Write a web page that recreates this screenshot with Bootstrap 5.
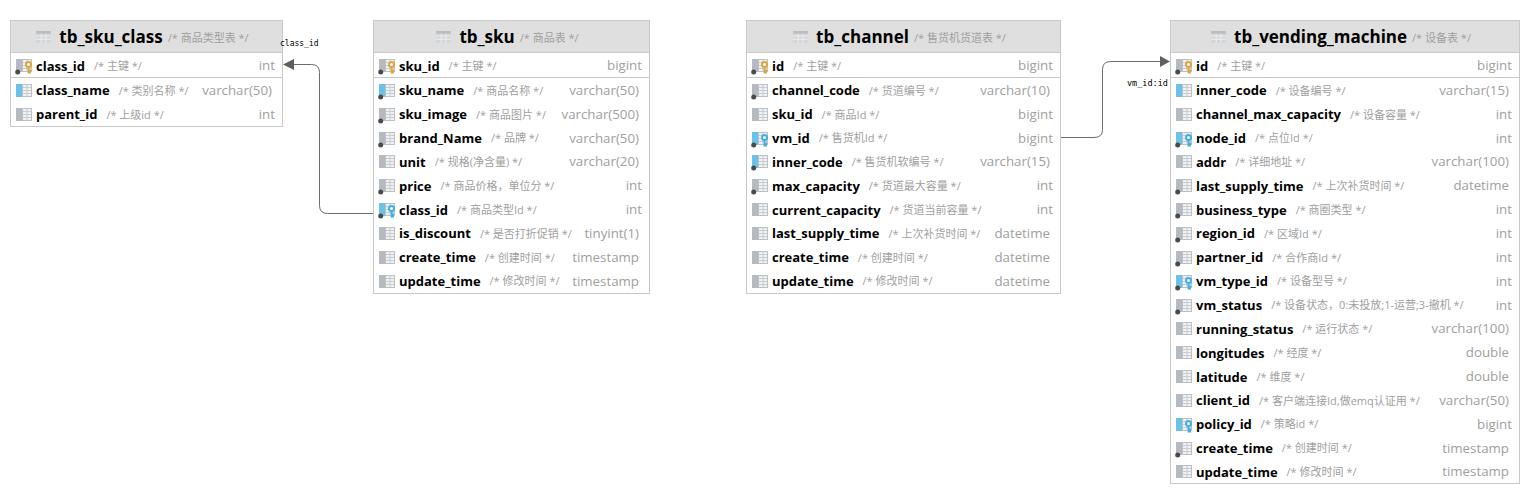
<!DOCTYPE html>
<html lang="zh">
<head>
<meta charset="utf-8">
<title>ER diagram</title>
<link href="https://cdn.jsdelivr.net/npm/bootstrap@5.3.0/dist/css/bootstrap.min.css" rel="stylesheet">
<style>
body{background:#fff;overflow:hidden;font-family:"Open Sans","Noto Sans CJK SC",sans-serif}
.canvas{position:relative;width:1534px;height:499px}
.links{position:absolute;left:0;top:0}
.er-table{position:absolute;top:20px;background:#fff;border:1px solid #c9c9c9}
.t1{left:10px;width:273px}
.t2{left:373px;width:277px}
.t3{left:746px;width:315px}
.t4{left:1170px;width:350px}
.er-head{height:32px;background:#dfdfdf;border-bottom:1px solid #c9c9c9;padding-right:8px}
.er-title{font-size:17px;font-weight:700;color:#000;line-height:1;margin:0 5px 0 8px}
.er-note{font-size:11px;color:#a0a0a0;white-space:nowrap;margin-top:3px}
.er-row{height:23.85px;padding-left:5px;padding-top:2px;white-space:nowrap}
.er-pk{height:25px;border-bottom:1px solid #c9c9c9}
.er-name{font-size:13px;font-weight:700;color:#000;margin-left:2px;line-height:1}
.er-cm{font-size:11px;color:#a0a0a0;margin-left:9px}
.er-ty{font-size:13.3px;color:#a0a0a0;margin-left:auto;padding-right:7px}
.er-ty.wide{padding-right:10px}
.ic{width:18px;height:18px;flex:none;overflow:visible}
symbol{overflow:visible}
.hic{width:15px;height:12px;flex:none}
.lbl{position:absolute;font-family:"DejaVu Sans Mono",monospace;font-size:8px;color:#000;line-height:1}
.l1{left:280px;top:40px}
.l2{left:1127px;top:79px;font-size:8.5px}
</style>
</head>
<body>
<svg width="0" height="0" class="position-absolute">
<defs>
<symbol id="hgrid" viewBox="0 0 16 13">
<rect width="16" height="13" fill="#d3d6d9"/>
<rect width="16" height="3" fill="#b9bec3"/>
<path d="M0 5.500H16M0 9H16M5.500 3V13M10.500 3V13" stroke="#f0f0f0" fill="none"/>
</symbol>
<symbol id="gc" viewBox="0 0 18 18">
<rect x="0" y="2" width="6" height="13" fill="#b5bac0"/>
<rect x="6.500" y="2.500" width="9" height="12" fill="#f0f1f2" stroke="#bcc1c5"/>
<path d="M7 5.500H15M7 8.500H15M7 11.500H15M11 3V14" stroke="#c8ccd0" fill="none"/>
</symbol>
<symbol id="bc" viewBox="0 0 18 18">
<rect x="0" y="2" width="6" height="13" fill="#6cc1e8"/>
<rect x="6.500" y="2.500" width="9" height="12" fill="#f0f1f2" stroke="#bcc1c5"/>
<path d="M7 5.500H15M7 8.500H15M7 11.500H15M11 3V14" stroke="#c8ccd0" fill="none"/>
</symbol>
<symbol id="dot" viewBox="0 0 18 18">
<circle cx="1.700" cy="15" r="2.500" fill="#4a4a4a"/>
</symbol>
<symbol id="gkey" viewBox="0 0 18 18">
<circle cx="12.500" cy="7.500" r="2.500" fill="#fff" stroke="#e0a63c" stroke-width="2"/>
<path d="M12.500 10V16.500M12.500 13.500H15M12.500 15.500H15" stroke="#e0a63c" stroke-width="1.800" fill="none"/>
</symbol>
<symbol id="bkey" viewBox="0 0 18 18">
<circle cx="12.500" cy="7.500" r="2.500" fill="#fff" stroke="#3fb0e3" stroke-width="2"/>
<path d="M12.500 10V16.500M12.500 13.500H15M12.500 15.500H15" stroke="#3fb0e3" stroke-width="1.800" fill="none"/>
</symbol>
<symbol id="pk" viewBox="0 0 18 18"><use href="#gc"/><use href="#gkey"/><use href="#dot"/></symbol>
<symbol id="fkd" viewBox="0 0 18 18"><use href="#bc"/><use href="#bkey"/><use href="#dot"/></symbol>
<symbol id="fk" viewBox="0 0 18 18"><use href="#bc"/><use href="#bkey"/></symbol>
<symbol id="gd" viewBox="0 0 18 18"><use href="#gc"/><use href="#dot"/></symbol>
<symbol id="bd" viewBox="0 0 18 18"><use href="#bc"/><use href="#dot"/></symbol>
</defs>
</svg>
<div class="canvas">
<svg class="links" width="1534" height="499" fill="none" stroke="#6b6b6b">
<path d="M373 213.500H327.500Q319.500 213.500 319.500 205.500V72.500Q319.500 64.500 311.500 64.500H293"/>
<path d="M283 64.500L294 59V70Z" fill="#5f5f5f" stroke="none"/>
<path d="M1061 137.500H1094Q1102.500 137.500 1102.500 129.500V69.500Q1102.500 61.500 1110.500 61.500H1160"/>
<path d="M1170 61.500L1160 56V67Z" fill="#5f5f5f" stroke="none"/>
</svg>

<div class="er-table t1">
<div class="er-head d-flex align-items-center justify-content-center"><svg class="hic"><use href="#hgrid"/></svg><span class="er-title">tb_sku_class</span><span class="er-note">/* 商品类型表 */</span></div>
<div class="er-row er-pk d-flex align-items-center"><svg class="ic"><use href="#pk"/></svg><span class="er-name">class_id</span><span class="er-cm">/* 主键 */</span><span class="er-ty">int</span></div>
<div class="er-row d-flex align-items-center"><svg class="ic"><use href="#bc"/></svg><span class="er-name">class_name</span><span class="er-cm">/* 类别名称 */</span><span class="er-ty wide">varchar(50)</span></div>
<div class="er-row d-flex align-items-center"><svg class="ic"><use href="#gc"/></svg><span class="er-name">parent_id</span><span class="er-cm">/* 上级id */</span><span class="er-ty">int</span></div>
</div>

<div class="er-table t2">
<div class="er-head d-flex align-items-center justify-content-center"><svg class="hic"><use href="#hgrid"/></svg><span class="er-title">tb_sku</span><span class="er-note">/* 商品表 */</span></div>
<div class="er-row er-pk d-flex align-items-center"><svg class="ic"><use href="#pk"/></svg><span class="er-name">sku_id</span><span class="er-cm">/* 主键 */</span><span class="er-ty">bigint</span></div>
<div class="er-row d-flex align-items-center"><svg class="ic"><use href="#bd"/></svg><span class="er-name">sku_name</span><span class="er-cm">/* 商品名称 */</span><span class="er-ty wide">varchar(50)</span></div>
<div class="er-row d-flex align-items-center"><svg class="ic"><use href="#gd"/></svg><span class="er-name">sku_image</span><span class="er-cm">/* 商品图片 */</span><span class="er-ty wide">varchar(500)</span></div>
<div class="er-row d-flex align-items-center"><svg class="ic"><use href="#gd"/></svg><span class="er-name">brand_Name</span><span class="er-cm">/* 品牌 */</span><span class="er-ty wide">varchar(50)</span></div>
<div class="er-row d-flex align-items-center"><svg class="ic"><use href="#gc"/></svg><span class="er-name">unit</span><span class="er-cm">/* 规格(净含量) */</span><span class="er-ty wide">varchar(20)</span></div>
<div class="er-row d-flex align-items-center"><svg class="ic"><use href="#gd"/></svg><span class="er-name">price</span><span class="er-cm">/* 商品价格，单位分 */</span><span class="er-ty">int</span></div>
<div class="er-row d-flex align-items-center"><svg class="ic"><use href="#fkd"/></svg><span class="er-name">class_id</span><span class="er-cm">/* 商品类型Id */</span><span class="er-ty">int</span></div>
<div class="er-row d-flex align-items-center"><svg class="ic"><use href="#gc"/></svg><span class="er-name">is_discount</span><span class="er-cm">/* 是否打折促销 */</span><span class="er-ty wide">tinyint(1)</span></div>
<div class="er-row d-flex align-items-center"><svg class="ic"><use href="#gc"/></svg><span class="er-name">create_time</span><span class="er-cm">/* 创建时间 */</span><span class="er-ty wide">timestamp</span></div>
<div class="er-row d-flex align-items-center"><svg class="ic"><use href="#gc"/></svg><span class="er-name">update_time</span><span class="er-cm">/* 修改时间 */</span><span class="er-ty wide">timestamp</span></div>
</div>

<div class="er-table t3">
<div class="er-head d-flex align-items-center justify-content-center"><svg class="hic"><use href="#hgrid"/></svg><span class="er-title">tb_channel</span><span class="er-note">/* 售货机货道表 */</span></div>
<div class="er-row er-pk d-flex align-items-center"><svg class="ic"><use href="#pk"/></svg><span class="er-name">id</span><span class="er-cm">/* 主键 */</span><span class="er-ty">bigint</span></div>
<div class="er-row d-flex align-items-center"><svg class="ic"><use href="#gd"/></svg><span class="er-name">channel_code</span><span class="er-cm">/* 货道编号 */</span><span class="er-ty wide">varchar(10)</span></div>
<div class="er-row d-flex align-items-center"><svg class="ic"><use href="#gc"/></svg><span class="er-name">sku_id</span><span class="er-cm">/* 商品Id */</span><span class="er-ty">bigint</span></div>
<div class="er-row d-flex align-items-center"><svg class="ic"><use href="#fkd"/></svg><span class="er-name">vm_id</span><span class="er-cm">/* 售货机Id */</span><span class="er-ty">bigint</span></div>
<div class="er-row d-flex align-items-center"><svg class="ic"><use href="#bd"/></svg><span class="er-name">inner_code</span><span class="er-cm">/* 售货机软编号 */</span><span class="er-ty wide">varchar(15)</span></div>
<div class="er-row d-flex align-items-center"><svg class="ic"><use href="#gd"/></svg><span class="er-name">max_capacity</span><span class="er-cm">/* 货道最大容量 */</span><span class="er-ty">int</span></div>
<div class="er-row d-flex align-items-center"><svg class="ic"><use href="#gc"/></svg><span class="er-name">current_capacity</span><span class="er-cm">/* 货道当前容量 */</span><span class="er-ty">int</span></div>
<div class="er-row d-flex align-items-center"><svg class="ic"><use href="#gc"/></svg><span class="er-name">last_supply_time</span><span class="er-cm">/* 上次补货时间 */</span><span class="er-ty wide">datetime</span></div>
<div class="er-row d-flex align-items-center"><svg class="ic"><use href="#gc"/></svg><span class="er-name">create_time</span><span class="er-cm">/* 创建时间 */</span><span class="er-ty wide">datetime</span></div>
<div class="er-row d-flex align-items-center"><svg class="ic"><use href="#gc"/></svg><span class="er-name">update_time</span><span class="er-cm">/* 修改时间 */</span><span class="er-ty wide">datetime</span></div>
</div>

<div class="er-table t4">
<div class="er-head d-flex align-items-center justify-content-center"><svg class="hic"><use href="#hgrid"/></svg><span class="er-title">tb_vending_machine</span><span class="er-note">/* 设备表 */</span></div>
<div class="er-row er-pk d-flex align-items-center"><svg class="ic"><use href="#pk"/></svg><span class="er-name">id</span><span class="er-cm">/* 主键 */</span><span class="er-ty">bigint</span></div>
<div class="er-row d-flex align-items-center"><svg class="ic"><use href="#bc"/></svg><span class="er-name">inner_code</span><span class="er-cm">/* 设备编号 */</span><span class="er-ty wide">varchar(15)</span></div>
<div class="er-row d-flex align-items-center"><svg class="ic"><use href="#gc"/></svg><span class="er-name">channel_max_capacity</span><span class="er-cm">/* 设备容量 */</span><span class="er-ty">int</span></div>
<div class="er-row d-flex align-items-center"><svg class="ic"><use href="#fkd"/></svg><span class="er-name">node_id</span><span class="er-cm">/* 点位Id */</span><span class="er-ty">int</span></div>
<div class="er-row d-flex align-items-center"><svg class="ic"><use href="#gc"/></svg><span class="er-name">addr</span><span class="er-cm">/* 详细地址 */</span><span class="er-ty wide">varchar(100)</span></div>
<div class="er-row d-flex align-items-center"><svg class="ic"><use href="#gd"/></svg><span class="er-name">last_supply_time</span><span class="er-cm">/* 上次补货时间 */</span><span class="er-ty wide">datetime</span></div>
<div class="er-row d-flex align-items-center"><svg class="ic"><use href="#gd"/></svg><span class="er-name">business_type</span><span class="er-cm">/* 商圈类型 */</span><span class="er-ty">int</span></div>
<div class="er-row d-flex align-items-center"><svg class="ic"><use href="#gd"/></svg><span class="er-name">region_id</span><span class="er-cm">/* 区域Id */</span><span class="er-ty">int</span></div>
<div class="er-row d-flex align-items-center"><svg class="ic"><use href="#gd"/></svg><span class="er-name">partner_id</span><span class="er-cm">/* 合作商Id */</span><span class="er-ty">int</span></div>
<div class="er-row d-flex align-items-center"><svg class="ic"><use href="#fkd"/></svg><span class="er-name">vm_type_id</span><span class="er-cm">/* 设备型号 */</span><span class="er-ty">int</span></div>
<div class="er-row d-flex align-items-center"><svg class="ic"><use href="#gd"/></svg><span class="er-name">vm_status</span><span class="er-cm">/* 设备状态，0:未投放;1-运营;3-撤机 */</span><span class="er-ty">int</span></div>
<div class="er-row d-flex align-items-center"><svg class="ic"><use href="#gc"/></svg><span class="er-name">running_status</span><span class="er-cm">/* 运行状态 */</span><span class="er-ty wide">varchar(100)</span></div>
<div class="er-row d-flex align-items-center"><svg class="ic"><use href="#gc"/></svg><span class="er-name">longitudes</span><span class="er-cm">/* 经度 */</span><span class="er-ty wide">double</span></div>
<div class="er-row d-flex align-items-center"><svg class="ic"><use href="#gc"/></svg><span class="er-name">latitude</span><span class="er-cm">/* 维度 */</span><span class="er-ty wide">double</span></div>
<div class="er-row d-flex align-items-center"><svg class="ic"><use href="#gc"/></svg><span class="er-name">client_id</span><span class="er-cm">/* 客户端连接Id,做emq认证用 */</span><span class="er-ty wide">varchar(50)</span></div>
<div class="er-row d-flex align-items-center"><svg class="ic"><use href="#fk"/></svg><span class="er-name">policy_id</span><span class="er-cm">/* 策略id */</span><span class="er-ty">bigint</span></div>
<div class="er-row d-flex align-items-center"><svg class="ic"><use href="#gd"/></svg><span class="er-name">create_time</span><span class="er-cm">/* 创建时间 */</span><span class="er-ty wide">timestamp</span></div>
<div class="er-row d-flex align-items-center"><svg class="ic"><use href="#gc"/></svg><span class="er-name">update_time</span><span class="er-cm">/* 修改时间 */</span><span class="er-ty wide">timestamp</span></div>
</div>

<span class="lbl l1">class_id</span>
<span class="lbl l2">vm_id:id</span>
</div>
<script src="https://cdn.jsdelivr.net/npm/bootstrap@5.3.0/dist/js/bootstrap.bundle.min.js"></script>
</body>
</html>
